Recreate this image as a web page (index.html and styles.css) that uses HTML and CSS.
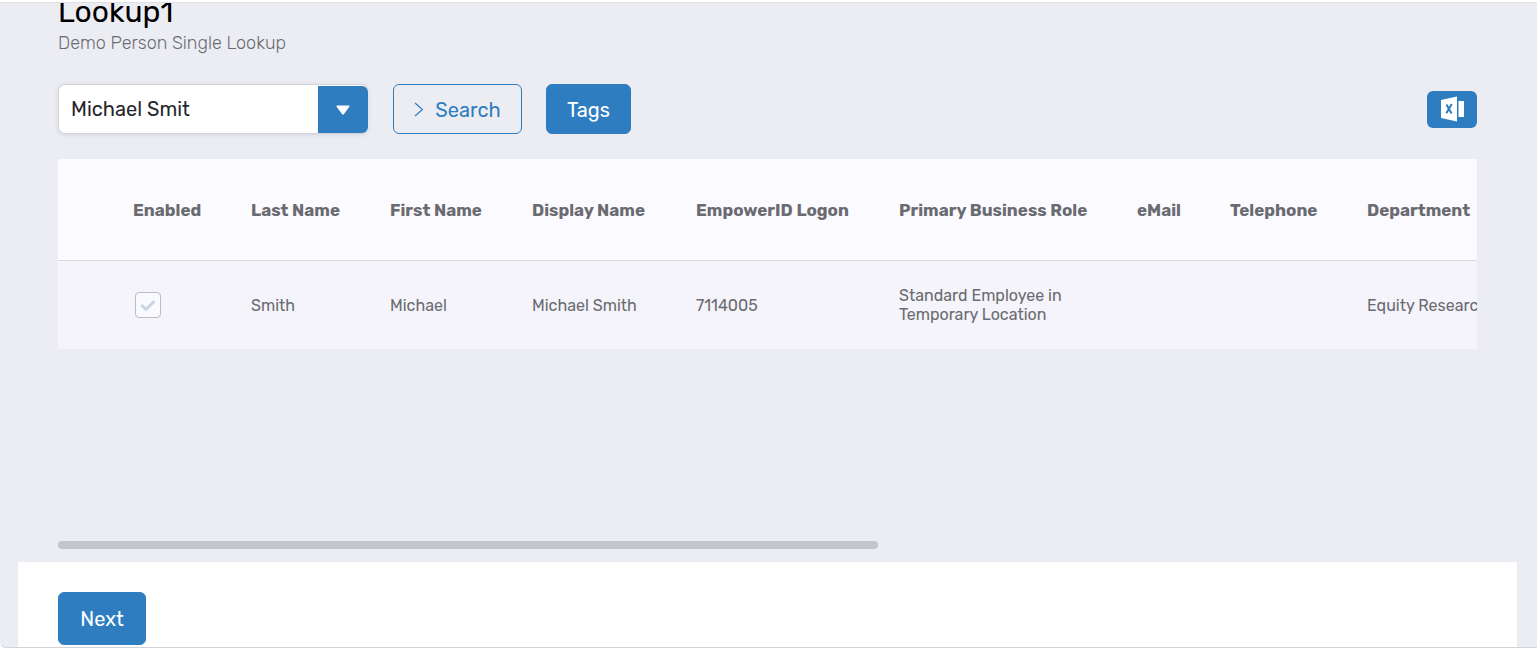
FILE: index.html
```html
<!DOCTYPE html>
<html lang="en">
<head>
<meta charset="utf-8">
<meta name="viewport" content="width=device-width, initial-scale=1">
<title>Lookup1</title>
<link rel="stylesheet" href="styles.css">
</head>
<body>
<main class="panel">
  <section class="content">
    <h1 class="title">Lookup1</h1>
    <p class="subtitle">Demo Person Single Lookup</p>
    <div class="toolbar">
      <div class="combo">
        <input class="combo-input" type="text" value="Michael Smit" aria-label="Person">
        <button class="combo-toggle" type="button" aria-label="Show options">
          <svg width="14" height="10" viewBox="0 0 14 10" aria-hidden="true"><path d="M1.2 0.5h11.6a.8.8 0 0 1 .6 1.2L8 9a1.2 1.2 0 0 1-2 0L.6 1.700a.8.8 0 0 1 .6-1.200z" fill="#fff"/></svg>
        </button>
      </div>
      <button class="btn btn-outline" type="button">
        <svg width="10" height="16" viewBox="0 0 10 16" aria-hidden="true"><path d="M1 1L8.500 7.500l-7.500 6.500" fill="none" stroke="currentColor" stroke-width="1.200"/></svg>
        <span>Search</span>
      </button>
      <button class="btn btn-solid" type="button">Tags</button>
      <button class="btn-export" type="button" aria-label="Export to Excel">
        <svg width="24" height="26" viewBox="0 0 24 26" aria-hidden="true">
          <path d="M1 4L17 0.500v25L1 22z" fill="#fff"/>
          <path d="M18.500 5h5.500v16h-5.500z" fill="#fff"/>
          <path d="M6.500 8.500l5 9M11.800 8l-5.500 9.200" fill="none" stroke="#2f7dc1" stroke-width="2"/>
        </svg>
      </button>
    </div>
    <div class="grid-wrap">
      <table class="grid">
        <colgroup>
          <col class="c-select"><col class="c-enabled"><col class="c-last"><col class="c-first"><col class="c-display"><col class="c-logon"><col class="c-role"><col class="c-mail"><col class="c-phone"><col class="c-dept">
        </colgroup>
        <thead>
          <tr><td></td><th>Enabled</th><th>Last Name</th><th>First Name</th><th>Display Name</th><th>EmpowerID Logon</th><th>Primary Business Role</th><th>eMail</th><th>Telephone</th><th>Department</th></tr>
        </thead>
        <tbody>
          <tr><td></td><td><input class="check" type="checkbox" checked disabled aria-label="Enabled"></td><td>Smith</td><td>Michael</td><td>Michael Smith</td><td>7114005</td><td>Standard Employee in<br>Temporary Location</td><td></td><td></td><td>Equity Research</td></tr>
        </tbody>
      </table>
    </div>
    <div class="scroll-track"><div class="scroll-thumb"></div></div>
  </section>
  <footer class="actions">
    <button class="btn btn-solid btn-next" type="button">Next</button>
  </footer>
</main>
</body>
</html>
```
FILE: styles.css
```css
* { box-sizing: border-box; }
body {
  margin: 0;
  background: #fff;
  color: #6a6b70;
  font-family: Rubik, Roboto, "Liberation Sans", sans-serif;
}
button, input { font: inherit; margin: 0; }
button { cursor: pointer; }
svg { flex: none; }
.panel {
  display: flex;
  flex-direction: column;
  min-height: calc(100vh - 2px);
  margin-top: 2px;
  padding: 0 20px 0 18px;
  overflow: hidden;
  background: #ecedf2;
  border-top: 1px solid #dedfe3;
  border-bottom: 1px solid #d3d4d8;
  border-bottom-left-radius: 6px;
}
.content {
  flex: 1;
  display: flex;
  flex-direction: column;
  padding: 0 40px 13px;
}
.title {
  margin: 0;
  color: #000;
  font-size: 30px;
  font-weight: 400;
  line-height: 18px;
}
.subtitle {
  margin: 10px 0 0;
  font-size: 18px;
  font-weight: 350;
  line-height: 24px;
}
.toolbar {
  display: flex;
  align-items: center;
  margin-top: 29px;
}
.combo {
  display: flex;
  width: 310px;
  height: 50px;
  padding-top: 1px;
  background: #fff;
  border: 1px solid #d2d3dc;
  border-right: 0;
  border-radius: 7px;
  box-shadow: 0 1px 4px rgba(60, 90, 140, 0.15);
}
.combo-input {
  flex: 1;
  min-width: 0;
  padding: 0 12px 2px;
  border: 0;
  border-radius: 7px;
  outline: 0;
  background: #fff;
  color: #26262b;
  font-size: 20px;
}
.combo-toggle {
  display: flex;
  align-items: center;
  justify-content: center;
  width: 50px;
  padding: 0;
  border: 0;
  border-radius: 0 6px 6px 0;
  background: #2f7dc1;
}
.btn {
  display: flex;
  align-items: center;
  justify-content: center;
  height: 50px;
  margin-left: 24px;
  padding: 2px 20px 0;
  border: 1px solid #2f7dc1;
  border-radius: 6px;
  font-size: 20px;
}
.btn-outline {
  gap: 11px;
  width: 129px;
  margin-left: 25px;
  background: transparent;
  color: #2f7dc1;
}
.btn-solid {
  width: 85px;
  background: #2f7dc1;
  color: #fff;
}
.btn-next {
  width: 88px;
  height: 53px;
  margin: 0;
  padding-top: 0;
}
.btn-export {
  display: flex;
  align-items: center;
  justify-content: center;
  width: 50px;
  height: 37px;
  margin-left: auto;
  padding: 0;
  border: 0;
  border-radius: 6px;
  background: #2f7dc1;
}
.grid-wrap {
  flex: 1;
  margin-top: 25px;
  overflow: hidden;
}
.grid {
  width: 1460px;
  table-layout: fixed;
  border-collapse: separate;
  border-spacing: 0;
  text-align: left;
}
.grid th, .grid td { padding: 0 0 0 25px; white-space: nowrap; }
.grid thead { background: #fbfaff; }
.grid thead td, .grid th {
  height: 102px;
  border-bottom: 1px solid #d8d8de;
}
.grid th {
  font-size: 17px;
  font-weight: 700;
}
.grid tbody { background: #f5f4fa; }
.grid tbody td {
  height: 88px;
  font-size: 16px;
  line-height: 19px;
}
.c-select { width: 50px; }
.c-enabled { width: 118px; }
.c-last { width: 139px; }
.c-first { width: 142px; }
.c-display { width: 164px; }
.c-logon { width: 203px; }
.c-role { width: 238px; }
.c-mail { width: 93px; }
.c-phone { width: 137px; }
.check {
  display: block;
  width: 26px;
  height: 26px;
  margin-left: 2px;
  appearance: none;
  border: 1px solid #bbbbc2;
  border-radius: 4px;
  background: #f9fafd url("data:image/svg+xml,%3Csvg xmlns='http://www.w3.org/2000/svg' viewBox='0 0 24 24'%3E%3Cpath d='M5.500 12l4.500 4.500L18.500 8' fill='none' stroke='%23c9d3e8' stroke-width='2.800'/%3E%3C/svg%3E") center / 24px 24px no-repeat;
}
.scroll-track { height: 8px; }
.scroll-thumb {
  width: 58%;
  max-width: 820px;
  height: 8px;
  border-radius: 4px;
  background: #c4c5ca;
}
.actions {
  padding: 30px 40px 2px;
  background: #fff;
}
```
